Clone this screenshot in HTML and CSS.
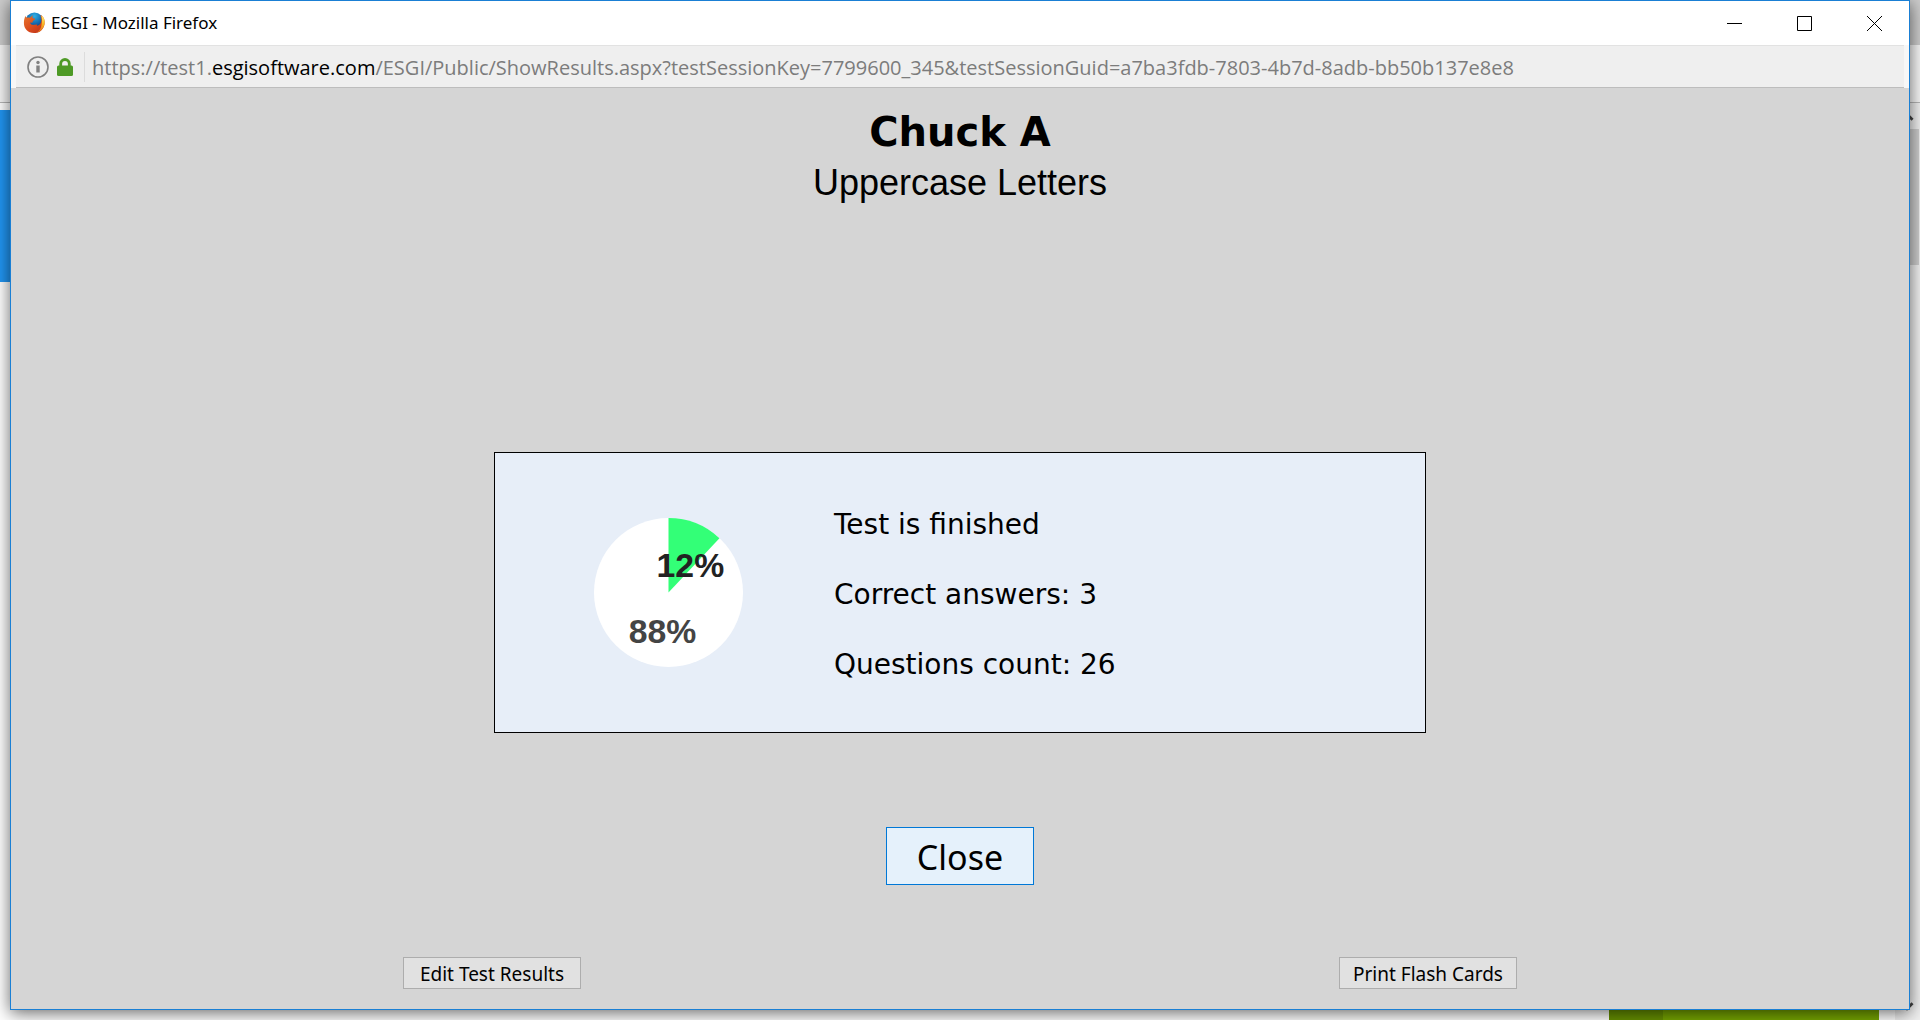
FILE: index.html
```html
<!DOCTYPE html>
<html lang="en">
<head>
<meta charset="utf-8">
<title>ESGI - Mozilla Firefox</title>
<link rel="stylesheet" href="styles.css">
</head>
<body>
<div class="desktop">
  <div class="backdrop" aria-hidden="true">
    <div class="back-title"></div>
    <div class="back-toolbar"></div>
    <div class="back-page">
      <div class="back-content">
        <div class="back-banner"></div>
        <div class="back-action"></div>
      </div>
      <div class="back-scrollbar">
        <svg class="scroll-arrow" viewBox="0 0 26 26"><path d="M7 17l6-6 6 6" fill="none" stroke="#444" stroke-width="3"/></svg>
        <div class="scroll-thumb"></div>
        <svg class="scroll-arrow" viewBox="0 0 26 26"><path d="M7 9l6 6 6-6" fill="none" stroke="#444" stroke-width="3"/></svg>
      </div>
    </div>
  </div>

  <div class="window">
    <header class="titlebar">
      <svg class="firefox" viewBox="0 0 24 24" aria-hidden="true">
        <defs>
          <radialGradient id="globe" cx=".5" cy=".2" r=".8"><stop offset="0" stop-color="#2fb0e6"/><stop offset=".55" stop-color="#1263a8"/><stop offset="1" stop-color="#0b2f63"/></radialGradient>
          <linearGradient id="fox" x1="0" y1="0" x2="1" y2="1"><stop offset="0" stop-color="#e8762c"/><stop offset=".55" stop-color="#d9481c"/><stop offset="1" stop-color="#b5301a"/></linearGradient>
          <linearGradient id="tail" x1="0" y1="0" x2="0" y2="1"><stop offset="0" stop-color="#fff27a"/><stop offset=".5" stop-color="#f9b824"/><stop offset="1" stop-color="#e2661b"/></linearGradient>
        </defs>
        <circle cx="12.500" cy="10.500" r="10" fill="url(#globe)"/>
        <path d="M20 3.500c3 2.500 4 5.500 3.500 9.500-1 6-5.500 10-11.500 10C5 23 1 18 1 12c0-3 .5-5.500 1.800-8 .2 1 .5 1.800 1 2.200 1.300-.5 2.700-.4 3.900.2C8.500 5 9.700 4 11.200 3.600 10.300 4.600 10 5.600 10.400 6.600c.8.500 2 .4 2.800.8-.2 1.500-2 1.700-2.500 2.500-.2.700.2 1.600-.7 1.700-1 .1-1.500-.2-2.200.1.600 2 2.600 2.800 4.700 2.300 1-.3 2-.8 2.800-.2.600.5 0 1.200-.8 1.700 3.500-.5 6-3.500 5.500-7.500-.1-1.700-.4-3-1-4.200z" fill="url(#fox)"/>
        <path d="M20 3.500c3 2.500 4 5.500 3.500 9.500-1 5-4.500 8.700-8.500 9.500 3-2 5-5 5.200-8.500.7-3.500.6-7-.2-10.500z" fill="url(#tail)"/>
      </svg>
      <h1 class="caption">ESGI - Mozilla Firefox</h1>
      <div class="controls">
        <button type="button" class="control" aria-label="Minimize"><svg viewBox="0 0 15 15"><path d="M0 7.500h15"/></svg></button>
        <button type="button" class="control" aria-label="Maximize"><svg viewBox="0 0 15 15"><path d="M.5.5h14v14H.5z"/></svg></button>
        <button type="button" class="control" aria-label="Close window"><svg viewBox="0 0 15 15"><path d="M0 0l15 15M15 0L0 15"/></svg></button>
      </div>
    </header>

    <div class="addressbar">
      <svg class="info" viewBox="0 0 22 22" aria-hidden="true"><circle cx="11" cy="11" r="10" fill="none" stroke="#808080" stroke-width="1.600"/><circle cx="11" cy="6.500" r="1.700" fill="#808080"/><path d="M11 9.500v7" stroke="#808080" stroke-width="3.400"/></svg>
      <svg class="lock" viewBox="0 0 16 18" aria-hidden="true"><path d="M3.700 9V5.800a4.300 4.300 0 0 1 8.600 0V9" fill="none" stroke="#4e9a26" stroke-width="2.800"/><rect x="0" y="7.500" width="16" height="10.500" rx="1.500" fill="#4e9a26"/></svg>
      <p class="url">https://test1.<strong>esgisoftware.com</strong>/ESGI/Public/ShowResults.aspx?testSessionKey=7799600_345&amp;testSessionGuid=a7ba3fdb-7803-4b7d-8adb-bb50b137e8e8</p>
    </div>

    <main class="page">
      <h2 class="student">Chuck A</h2>
      <p class="test-name">Uppercase Letters</p>
      <section class="results">
        <svg class="pie" viewBox="0 0 150 150" role="img" aria-label="12% correct, 88% remaining">
          <circle cx="75" cy="75" r="75" fill="#fff"/>
          <path d="M75 75V0a75 75 0 0 1 51.300 20.300z" fill="#33ff77"/>
          <text x="63" y="59" fill="#222">12%</text>
          <text x="35" y="126" fill="#444">88%</text>
        </svg>
        <div class="summary">
          <p>Test is finished</p>
          <p>Correct answers: 3</p>
          <p>Questions count: 26</p>
        </div>
      </section>
      <button type="button" class="button close">Close</button>
      <div class="actions">
        <button type="button" class="button">Edit Test Results</button>
        <button type="button" class="button">Print Flash Cards</button>
      </div>
    </main>
  </div>
</div>
</body>
</html>
```
FILE: styles.css
```css
* { box-sizing: border-box; }

body {
  margin: 0;
  color: #000;
  font-family: "Noto Sans", "Open Sans", sans-serif;
}

h1, h2, p { margin: 0; font-weight: 400; }

button { color: inherit; font-family: inherit; }

.desktop {
  position: relative;
  display: flex;
  min-height: 100vh;
  padding: 0 10px 10px;
  overflow: hidden;
}

/* Parent browser window, visible round the edges of the popup */
.backdrop {
  position: absolute;
  inset: 0;
  display: flex;
  flex-direction: column;
  background: #fff;
}

.back-title { height: 45px; background: #cccccc; }

.back-toolbar {
  height: 58px;
  background: #f6f6f6;
  border-bottom: 1px solid #b6b6b6;
}

.back-page { display: flex; flex: 1; }

.back-content {
  display: flex;
  flex: 1;
  flex-direction: column;
  justify-content: space-between;
  padding: 7px 16px 0 0;
}

.back-banner { width: 50%; height: 172px; background: #2196f3; }

.back-action {
  align-self: flex-end;
  width: 270px;
  height: 40px;
  background: linear-gradient(90deg, #669000 20%, #76a500 20%);
}

.back-scrollbar {
  display: flex;
  flex-direction: column;
  width: 25px;
  padding-right: 1px;
  background: #f0f0f0;
}

.scroll-arrow { width: 24px; height: 26px; }

.scroll-thumb { height: 136px; margin-bottom: auto; background: #cdcdcd; }

.window {
  position: relative;
  display: flex;
  flex: 1;
  flex-direction: column;
  background: #d5d5d5;
  border: 1px solid #1a7fd4;
  box-shadow: 0 3px 16px rgba(0, 0, 0, 0.6);
}

.titlebar {
  display: flex;
  align-items: center;
  height: 44px;
  padding-left: 12px;
  background: #fff;
}

.firefox { width: 22px; height: 24px; }

.caption { margin-left: 6px; font-size: 17px; line-height: 24px; }

.controls { display: flex; margin-left: auto; }

.control {
  display: grid;
  place-items: center;
  width: 70px;
  height: 44px;
  padding: 0;
  background: none;
  border: 0;
}

.control svg {
  width: 15px;
  height: 15px;
  fill: none;
  stroke: #000;
}

.addressbar {
  display: flex;
  align-items: center;
  height: 43px;
  padding-left: 16px;
  background: #efefef;
  border: solid #f7f7f7;
  border-width: 0 5px;
  box-shadow: inset 0 1px #e2e2e2, inset 0 -1px #bdbdbd;
}

.info { width: 22px; height: 22px; margin-left: -5px; }

.lock { width: 16px; height: 18px; margin-left: 8px; }

.url {
  margin-left: 11px;
  padding: 2px 0 0 7px;
  border-left: 1px solid #dcdcdc;
  color: #7c7c7c;
  font-family: "Open Sans", "Noto Sans", sans-serif;
  font-size: 20px;
  line-height: 28px;
  white-space: nowrap;
}

.url strong { color: #000; font-weight: 400; }

.page {
  display: flex;
  flex: 1;
  flex-direction: column;
  align-items: center;
  padding: 20px 0;
}

.student {
  font-family: "DejaVu Sans", sans-serif;
  font-size: 40px;
  font-weight: 700;
  line-height: 48px;
}

.test-name {
  font-family: "Liberation Sans", sans-serif;
  font-size: 36px;
  line-height: 54px;
}

.results {
  display: flex;
  align-items: center;
  width: 932px;
  max-width: 100%;
  min-height: 281px;
  margin: auto 0 94px;
  padding-left: 99px;
  background: #e7eef8;
  border: 1px solid #000;
}

.pie {
  width: 149px;
  height: 149px;
  font: 700 34px "Liberation Sans", sans-serif;
}

.summary {
  display: grid;
  gap: 30px;
  margin-left: 91px;
  padding-top: 5px;
  font-family: "DejaVu Sans", sans-serif;
  font-size: 28px;
  line-height: 40px;
}

.button {
  min-width: 178px;
  height: 32px;
  padding: 2px 0 0;
  background: #e1e1e1;
  border: 1px solid #adadad;
  font-size: 19px;
  line-height: 28px;
}

.close {
  min-width: 148px;
  height: 58px;
  background: #e5f1fb;
  border-color: #0078d7;
  font-size: 34px;
  line-height: 54px;
}

.actions {
  display: flex;
  justify-content: space-between;
  width: 1114px;
  max-width: 100%;
  margin-top: 72px;
}
```
